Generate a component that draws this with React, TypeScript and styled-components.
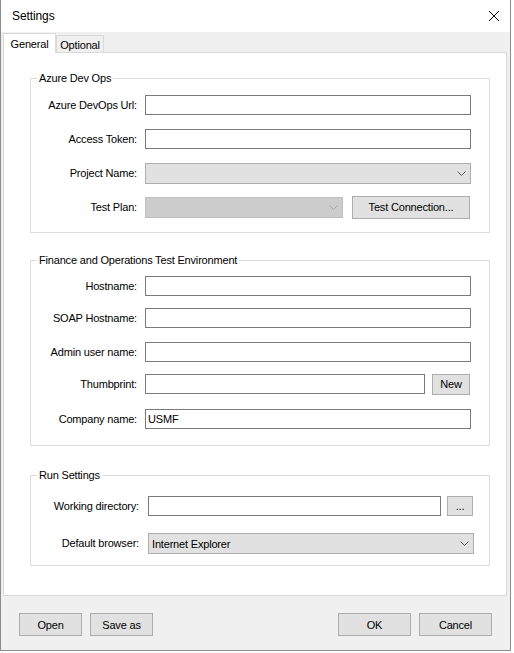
import React from "react";
import styled, { createGlobalStyle } from "styled-components";

const Global = createGlobalStyle`
  html, body { margin: 0; padding: 0; background: #ffffff; }
  body {
    font-family: "Liberation Sans", Arial, sans-serif;
    font-size: 11px;
    letter-spacing: -0.18px;
    color: #000;
  }
  * { box-sizing: border-box; }
`;

const Window = styled.div`
  width: 511px;
  height: 651px;
  border: 1px solid #8c8c8c;
  border-top: none;
  background: #f0f0f0;
  display: flex;
  flex-direction: column;
`;

const TitleBar = styled.div`
  height: 32px;
  flex: none;
  background: #ffffff;
  display: flex;
  align-items: center;
  justify-content: space-between;
  padding: 0 11px 0 11px;
  font-family: "Segoe UI", "Liberation Sans", Arial, sans-serif;
  font-size: 12px;
  letter-spacing: -0.1px;
  color: #000;
`;

const Client = styled.div`
  height: 564px;
  flex: none;
  display: flex;
  flex-direction: column;
  padding: 0 3px 0 2px;
`;

const TabStrip = styled.div`
  height: 20px;
  flex: none;
  display: flex;
  align-items: flex-end;
  position: relative;
  z-index: 1;
`;

const Tab = styled.div<{ $active?: boolean; $w: number }>`
  width: ${(p) => p.$w}px;
  height: ${(p) => (p.$active ? 20 : 17)}px;
  margin-bottom: ${(p) => (p.$active ? -1 : 0)}px;
  background: ${(p) => (p.$active ? "#ffffff" : "#f0f0f0")};
  border: 1px solid #d9d9d9;
  border-bottom: none;
  display: flex;
  align-items: center;
  justify-content: center;
  padding-top: ${(p) => (p.$active ? 0 : 1)}px;
  font-size: 11px;
`;

const Panel = styled.div`
  flex: 1;
  background: #ffffff;
  border: 1px solid #d9d9d9;
  display: flex;
  flex-direction: column;
  padding: 25px 0 0 26px;
`;

const Group = styled.div<{ $mt: number; $pad: string }>`
  position: relative;
  width: 460px;
  margin-top: ${(p) => p.$mt}px;
  padding: ${(p) => p.$pad};
  border: 1px solid #dcdcdc;
  display: flex;
  flex-direction: column;
`;

const Legend = styled.span`
  position: absolute;
  top: -8px;
  left: 6px;
  padding: 0 2px;
  background: #ffffff;
  line-height: 14px;
  font-size: 11px;
`;

const Row = styled.div<{ $label: number; $gap: number; $mt?: number }>`
  display: grid;
  grid-template-columns: ${(p) => p.$label}px 1fr;
  column-gap: ${(p) => p.$gap}px;
  height: 20px;
  align-items: center;
  margin-top: ${(p) => p.$mt ?? 0}px;
`;

const Label = styled.label`
  text-align: right;
  white-space: nowrap;
  font-size: 11px;
  line-height: 20px;
`;

const Field = styled.div`
  display: flex;
  align-items: center;
  height: 20px;
`;

const TextBox = styled.div<{ $w: number }>`
  width: ${(p) => p.$w}px;
  height: 20px;
  flex: none;
  border: 1px solid #7a7a7a;
  background: #ffffff;
  padding: 0 2px;
  display: flex;
  align-items: center;
  font-size: 11px;
`;

const Combo = styled.div<{ $w: number; $disabled?: boolean }>`
  width: ${(p) => p.$w}px;
  height: 21px;
  flex: none;
  margin-top: 1px;
  border: 1px solid ${(p) => (p.$disabled ? "#bfbfbf" : "#adadad")};
  background: ${(p) => (p.$disabled ? "#cccccc" : "#e1e1e1")};
  display: flex;
  align-items: center;
  justify-content: space-between;
  padding: 0 4px 0 3px;
  font-size: 11px;
`;

const Button = styled.div<{ $w: number; $h?: number; $ml?: number }>`
  width: ${(p) => p.$w}px;
  height: ${(p) => p.$h ?? 23}px;
  flex: none;
  margin-left: ${(p) => p.$ml ?? 0}px;
  background: #e1e1e1;
  border: 1px solid #adadad;
  display: flex;
  align-items: center;
  justify-content: center;
  font-size: 11px;
`;

const Footer = styled.div`
  flex: 1;
  display: flex;
  align-items: flex-start;
  gap: 8px;
  padding: 17px 18px 0 18px;
`;

const Spacer = styled.div`
  flex: 1;
`;

const Chevron = ({ color }: { color: string }) => (
  <svg width="9" height="5" viewBox="0 0 9 5">
    <path d="M0.5 0.5 L4.5 4.5 L8.5 0.5" fill="none" stroke={color} strokeWidth="1" />
  </svg>
);

const CloseIcon = () => (
  <svg width="10" height="10" viewBox="0 0 10 10">
    <path d="M0 0 L10 10 M10 0 L0 10" stroke="#000" strokeWidth="1" />
  </svg>
);

export default function App() {
  return (
    <>
      <Global />
      <Window>
        <TitleBar>
          <span>Settings</span>
          <CloseIcon />
        </TitleBar>
        <Client>
          <TabStrip>
            <Tab $active $w={53}>General</Tab>
            <Tab $w={48}>Optional</Tab>
          </TabStrip>
          <Panel>
            <Group $mt={0} $pad="16px 18px 15px 0">
              <Legend>Azure Dev Ops</Legend>
              <Row $label={106} $gap={8}>
                <Label>Azure DevOps Url:</Label>
                <Field>
                  <TextBox $w={326} />
                </Field>
              </Row>
              <Row $label={106} $gap={8} $mt={14}>
                <Label>Access Token:</Label>
                <Field>
                  <TextBox $w={326} />
                </Field>
              </Row>
              <Row $label={106} $gap={8} $mt={14}>
                <Label>Project Name:</Label>
                <Field>
                  <Combo $w={326}>
                    <span />
                    <Chevron color="#5a5a5a" />
                  </Combo>
                </Field>
              </Row>
              <Row $label={106} $gap={8} $mt={14}>
                <Label>Test Plan:</Label>
                <Field>
                  <Combo $w={198} $disabled>
                    <span />
                    <Chevron color="#a8a8a8" />
                  </Combo>
                  <Button $w={118} $ml={9}>Test Connection...</Button>
                </Field>
              </Row>
            </Group>

            <Group $mt={27} $pad="15px 18px 16px 0">
              <Legend>Finance and Operations Test Environment</Legend>
              <Row $label={106} $gap={8}>
                <Label>Hostname:</Label>
                <Field>
                  <TextBox $w={326} />
                </Field>
              </Row>
              <Row $label={106} $gap={8} $mt={12}>
                <Label>SOAP Hostname:</Label>
                <Field>
                  <TextBox $w={326} />
                </Field>
              </Row>
              <Row $label={106} $gap={8} $mt={14}>
                <Label>Admin user name:</Label>
                <Field>
                  <TextBox $w={326} />
                </Field>
              </Row>
              <Row $label={106} $gap={8} $mt={12}>
                <Label>Thumbprint:</Label>
                <Field>
                  <TextBox $w={280} />
                  <Button $w={38} $h={21} $ml={7}>New</Button>
                </Field>
              </Row>
              <Row $label={106} $gap={8} $mt={15}>
                <Label>Company name:</Label>
                <Field>
                  <TextBox $w={326}>USMF</TextBox>
                </Field>
              </Row>
            </Group>

            <Group $mt={29} $pad="20px 15px 12px 0">
              <Legend>Run Settings</Legend>
              <Row $label={108} $gap={9}>
                <Label>Working directory:</Label>
                <Field>
                  <TextBox $w={293} />
                  <Button $w={26} $h={20} $ml={6}>...</Button>
                </Field>
              </Row>
              <Row $label={108} $gap={9} $mt={17}>
                <Label>Default browser:</Label>
                <Field>
                  <Combo $w={326}>
                    <span>Internet Explorer</span>
                    <Chevron color="#5a5a5a" />
                  </Combo>
                </Field>
              </Row>
            </Group>
          </Panel>
        </Client>
        <Footer>
          <Button $w={63}>Open</Button>
          <Button $w={63}>Save as</Button>
          <Spacer />
          <Button $w={73}>OK</Button>
          <Button $w={73}>Cancel</Button>
        </Footer>
      </Window>
    </>
  );
}
